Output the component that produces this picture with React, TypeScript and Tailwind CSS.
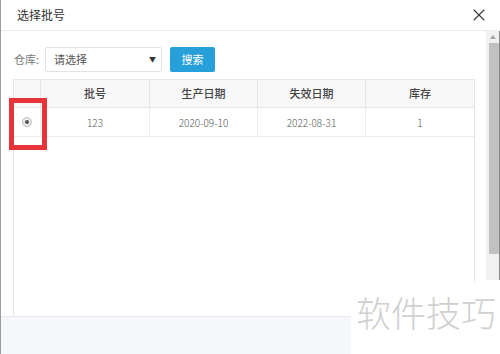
import { X } from "lucide-react";

const cols = ["", "批号", "生产日期", "失效日期", "库存"];
const row = ["123", "2020-09-10", "2022-08-31", "1"];

export default function App() {
  return (
    <div className="relative h-[354px] w-[500px] overflow-hidden border-l border-[#9c9c9c] bg-white font-['Noto_Sans_CJK_SC',sans-serif]">
      {/* header */}
      <div className="flex h-[31px] items-center justify-between border-b border-[#ebebeb] pl-4 pr-[11px]">
        <span className="text-[12px] text-[#333]">选择批号</span>
        <X size={20} strokeWidth={1.3} className="text-[#3a3a3a]" />
      </div>

      {/* body */}
      <div className="flex h-[285px]">
        <div className="flex flex-1 flex-col pl-3 pr-[11px]">
          <div className="mt-4 flex h-[25px] items-center">
            <span className="ml-px w-[31px] text-[11px] text-[#777]">仓库:</span>
            <div className="flex h-[25px] w-[117px] items-center justify-between rounded-[2px] border border-[#e2e2e2] pl-2 pr-[5px]">
              <span className="text-[11px] text-[#555]">请选择</span>
              <span className="text-[7px] text-[#333]">▼</span>
            </div>
            <button className="ml-2 flex h-[25px] w-[45px] items-center justify-center rounded-[2px] bg-[#279fd8] text-[11px] text-white">
              搜索
            </button>
          </div>

          <div className="mt-[7px] flex-1 border-x border-t border-[#e6e6e6]">
            <div className="grid h-[28px] grid-cols-[27px_109px_108px_108px_108px] border-b border-[#e6e6e6] bg-[#f8f8f8]">
              {cols.map((c, i) => (
                <div
                  key={i}
                  className={`flex items-center justify-center text-[11px] font-medium text-[#444] ${i < 4 ? "border-r border-[#e6e6e6]" : ""}`}
                >
                  {c}
                </div>
              ))}
            </div>
            <div className="grid h-[29px] grid-cols-[27px_109px_108px_108px_108px] border-b border-[#ececec]">
              <div className="flex items-center justify-center border-r border-[#ececec]">
                <span className="flex h-[10px] w-[10px] items-center justify-center rounded-full border border-[#bdbdbd] bg-[#e9e9e9]">
                  <span className="h-[4px] w-[4px] rounded-full bg-[#555]" />
                </span>
              </div>
              {row.map((v, i) => (
                <div
                  key={i}
                  className={`flex items-center justify-center text-[10px] font-light text-[#555] ${i < 3 ? "border-r border-[#ececec]" : ""}`}
                >
                  {v}
                </div>
              ))}
            </div>
          </div>
        </div>

        {/* scrollbar */}
        <div className="flex h-[249px] w-[15px] border-r-2 border-[#8a8a8a] bg-[#f1f1f1]">
          <div className="flex w-[13px] flex-col items-center">
            <div className="flex h-[12px] items-center justify-center">
              <div className="h-0 w-0 border-x-[3px] border-b-[4px] border-x-transparent border-b-[#a3a3a3]" />
            </div>
            <div className="ml-[2px] h-[211px] w-[10px] bg-[#c1c1c1]" />
          </div>
        </div>
      </div>

      {/* footer */}
      <div className="h-[38px] border-t border-[#e6e8ee] bg-[#f6f7fb]" />

      {/* red highlight */}
      <div className="absolute left-[8px] top-[98px] h-[52px] w-[38px] border-[5px] border-[#e8333b]" />

      {/* watermark */}
      <div className="absolute left-[350px] top-[282px] flex h-[72px] w-[150px] items-start justify-center bg-white pt-[8px]">
        <span className="text-[35px] font-light leading-[44px] text-[#d0d0d0]">软件技巧</span>
      </div>
    </div>
  );
}
